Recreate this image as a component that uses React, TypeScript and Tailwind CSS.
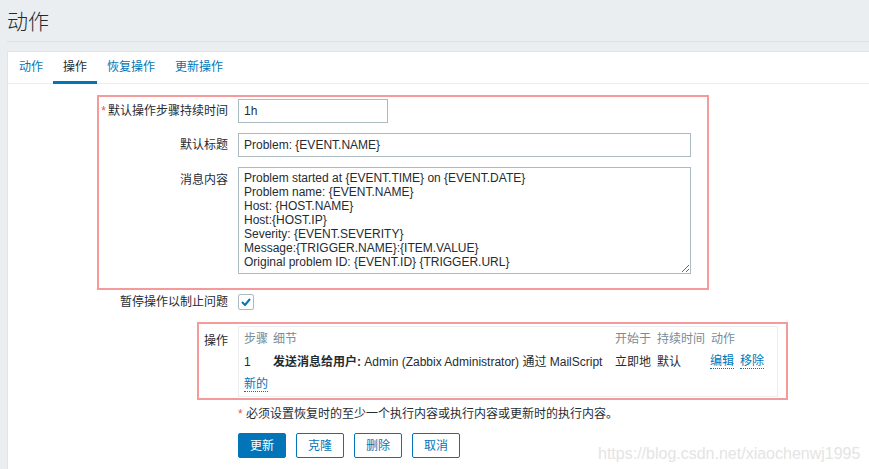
import React from 'react';

const font = { fontFamily: '"Liberation Sans", Arial, "Noto Sans CJK SC", sans-serif' };

const message = `Problem started at {EVENT.TIME} on {EVENT.DATE}
Problem name: {EVENT.NAME}
Host: {HOST.NAME}
Host:{HOST.IP}
Severity: {EVENT.SEVERITY}
Message:{TRIGGER.NAME}:{ITEM.VALUE}
Original problem ID: {EVENT.ID} {TRIGGER.URL}`;

function Tab({ label, active }: { label: string; active?: boolean }) {
  return (
    <div
      className={
        'h-[32px] -mb-px px-[10px] flex items-center ' +
        (active ? 'border-b-[3px] border-[#0275b8] text-[#1f2c33]' : 'text-[#0275b8] pb-[3px]')
      }
    >
      {label}
    </div>
  );
}

function LinkText({ children }: { children: React.ReactNode }) {
  return <span className="text-[#0275b8] border-b border-dotted border-[#0275b8] leading-[14px]">{children}</span>;
}

function Btn({ label, primary }: { label: string; primary?: boolean }) {
  return (
    <button
      className={
        'h-[25px] px-[11px] rounded-[2px] border border-[#0275b8] ' +
        (primary ? 'bg-[#0275b8] text-white' : 'bg-white text-[#0275b8]')
      }
    >
      {label}
    </button>
  );
}

export default function App() {
  return (
    <div className="relative min-h-[469px] bg-[#ebeef0] text-[12px] text-[#1f2c33] overflow-hidden" style={font}>
      {/* header */}
      <div className="pl-[7px]">
        <div className="h-[42px] border-b border-[#dde1e4] flex items-center pt-[2px]">
          <h1 className="text-[21px] leading-none font-light text-[#1f2c33]">动作</h1>
        </div>
      </div>

      <div className="pl-[7px] pt-[9px]">
        <div className="bg-white border-l border-t border-[#dfe4e7] min-h-[420px]">
          {/* tabs */}
          <div className="flex border-b border-[#ebeef0] pl-px">
            <Tab label="动作" />
            <Tab label="操作" active />
            <Tab label="恢复操作" />
            <Tab label="更新操作" />
          </div>

          <div className="pt-[11px] pl-[89px]">
            {/* red box 1 */}
            <div className="w-[612px] border-2 border-[#f59a9a] pt-[2px] pb-[14px]">
              <div className="flex items-center gap-[10px]">
                <div className="w-[129px] text-right">
                  <span className="text-[#e45959] mr-[2px]">*</span>默认操作步骤持续时间
                </div>
                <div className="w-[150px] h-[24px] border border-[#acbbc2] px-[5px] flex items-center">1h</div>
              </div>
              <div className="flex items-center gap-[10px] mt-[10px]">
                <div className="w-[129px] text-right">默认标题</div>
                <div className="w-[453px] h-[24px] border border-[#acbbc2] px-[5px] flex items-center">
                  Problem: {'{EVENT.NAME}'}
                </div>
              </div>
              <div className="flex items-start gap-[10px] mt-[10px]">
                <div className="w-[129px] text-right pt-[4px]">消息内容</div>
                <textarea
                  readOnly
                  value={message}
                  className="w-[453px] h-[107px] border border-[#acbbc2] px-[5px] pt-[3px] text-[12px] leading-[14px] text-[#1f2c33] outline-none resize"
                  style={font}
                />
              </div>
            </div>

            {/* checkbox row */}
            <div className="flex items-center gap-[10px] mt-[3px] pl-[2px]">
              <div className="w-[129px] text-right">暂停操作以制止问题</div>
              <div className="w-[16px] h-[16px] border border-[#acbbc2] rounded-[2px] flex items-center justify-center">
                <svg width="10" height="8" viewBox="0 0 10 8">
                  <path d="M1 4 L4 7 L9 1" fill="none" stroke="#0275b8" strokeWidth="2" />
                </svg>
              </div>
            </div>

            {/* red box 2 */}
            <div className="ml-[100px] mt-[11px] w-[591px] border-2 border-[#f59a9a] pt-[2px] pb-px pr-[8px] flex gap-[10px]">
              <div className="w-[29px] text-right pt-[6px]">操作</div>
              <div className="flex-1 border border-[#ebeef0] pl-[5px]">
                <div className="grid grid-cols-[29px_342px_42px_55px_1fr] h-[23px] items-center text-[#768d99]">
                  <div>步骤</div>
                  <div>细节</div>
                  <div>开始于</div>
                  <div>持续时间</div>
                  <div className="-ml-px">动作</div>
                </div>
                <div className="grid grid-cols-[29px_342px_42px_55px_1fr] h-[23px] items-center">
                  <div>1</div>
                  <div className="whitespace-nowrap">
                    <span className="font-bold">发送消息给用户:</span> Admin (Zabbix Administrator) 通过 MailScript
                  </div>
                  <div>立即地</div>
                  <div>默认</div>
                  <div className="flex gap-[6px] -ml-[2px]">
                    <LinkText>编辑</LinkText>
                    <LinkText>移除</LinkText>
                  </div>
                </div>
                <div className="h-[23px] flex items-center">
                  <LinkText>新的</LinkText>
                </div>
              </div>
            </div>

            {/* note */}
            <div className="ml-[141px] mt-[7px] h-[14px] leading-[14px]">
              <span className="text-[#e45959]">*</span> 必须设置恢复时的至少一个执行内容或执行内容或更新时的执行内容。
            </div>

            {/* buttons */}
            <div className="ml-[141px] mt-[12px] flex gap-[10px]">
              <Btn label="更新" primary />
              <Btn label="克隆" />
              <Btn label="删除" />
              <Btn label="取消" />
            </div>
          </div>
        </div>
      </div>

      {/* watermark */}
      <div className="absolute left-[598px] top-[442px] text-[16px] text-[#e4e4e4] pointer-events-none">
        https://blog.csdn.net/xiaochenwj1995
      </div>
    </div>
  );
}
